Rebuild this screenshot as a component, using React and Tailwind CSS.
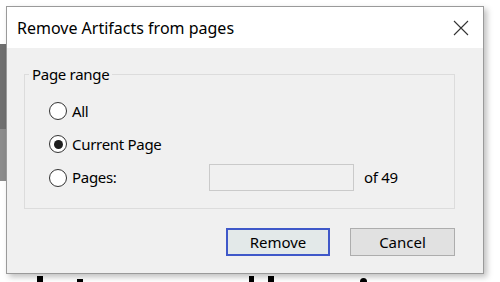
import { useState } from "react";

function Radio({ checked }) {
  return (
    <span className="flex h-[18px] w-[18px] shrink-0 items-center justify-center rounded-full border border-[#333333] bg-white">
      {checked && <span className="h-[9px] w-[9px] rounded-full bg-[#1f1f1f]" />}
    </span>
  );
}

export default function App() {
  const [range, setRange] = useState("current");

  return (
    <div
      className="relative h-[282px] w-[500px] overflow-hidden bg-white text-black"
      style={{ fontFamily: '"Noto Sans", "Open Sans", sans-serif' }}
    >
      {/* page behind the dialog */}
      <div className="absolute left-0 top-[44px] h-[85px] w-[7px] bg-[#6f6f6f]" />
      <div className="absolute left-0 top-[129px] h-[52px] w-[7px] bg-[#8c8c8c]" />
      <div className="absolute left-[37px] top-[276px] h-[8px] w-[6px] bg-black" />
      <div className="absolute left-[77px] top-[279px] h-[6px] w-[6px] bg-black" />
      <div className="absolute left-[249px] top-[276px] h-[8px] w-[5px] bg-black" />
      <div className="absolute left-[268px] top-[276px] h-[8px] w-[6px] bg-black" />
      <div className="absolute left-[360px] top-[278px] h-[8px] w-[7px] rounded-full bg-black" />

      {/* dialog */}
      <div className="absolute left-[6px] top-[6px] flex h-[268px] w-[478px] flex-col border border-[#9a9a9a] shadow-[3px_3px_6px_rgba(0,0,0,0.25)]">
        <div className="flex h-[41px] items-center justify-between bg-white pl-[10px] pr-[14px]">
          <span className="text-[16px]">Remove Artifacts from pages</span>
          <svg width="16" height="16" viewBox="0 0 16 16" className="text-[#333]">
            <path d="M1 1 L15 15 M15 1 L1 15" stroke="currentColor" strokeWidth="1.1" fill="none" />
          </svg>
        </div>

        <div className="flex flex-1 flex-col bg-[#f0f0f0] pl-[17px] pr-[28px] pt-[15px] text-[15px] tracking-[-0.3px]">
          <fieldset className="h-[146px] border border-[#dcdcdc]">
            <legend className="ml-[4px] px-[3px]">Page range</legend>
            <div className="flex flex-col pt-[9px]">
              <label className="flex h-[33px] items-center pl-[24px]" onClick={() => setRange("all")}>
                <Radio checked={range === "all"} />
                <span className="ml-[5px]">All</span>
              </label>
              <label className="flex h-[33px] items-center pl-[24px]" onClick={() => setRange("current")}>
                <Radio checked={range === "current"} />
                <span className="ml-[5px]">Current Page</span>
              </label>
              <div className="flex h-[34px] items-center pl-[24px]">
                <label className="flex w-[160px] items-center" onClick={() => setRange("pages")}>
                  <Radio checked={range === "pages"} />
                  <span className="ml-[5px]">Pages:</span>
                </label>
                <div className="h-[27px] w-[145px] border border-[#cacaca] bg-[#f0f0f0]" />
                <span className="ml-[10px]">of 49</span>
              </div>
            </div>
          </fieldset>

          <div className="mt-[19px] flex justify-end gap-[20px]">
            <button className="h-[28px] w-[104px] border-2 border-[#3f58c9] bg-[#e3e9e9] tracking-normal">Remove</button>
            <button className="h-[28px] w-[105px] border border-[#adadad] bg-[#e1e1e1] tracking-normal">Cancel</button>
          </div>
        </div>
      </div>
    </div>
  );
}
